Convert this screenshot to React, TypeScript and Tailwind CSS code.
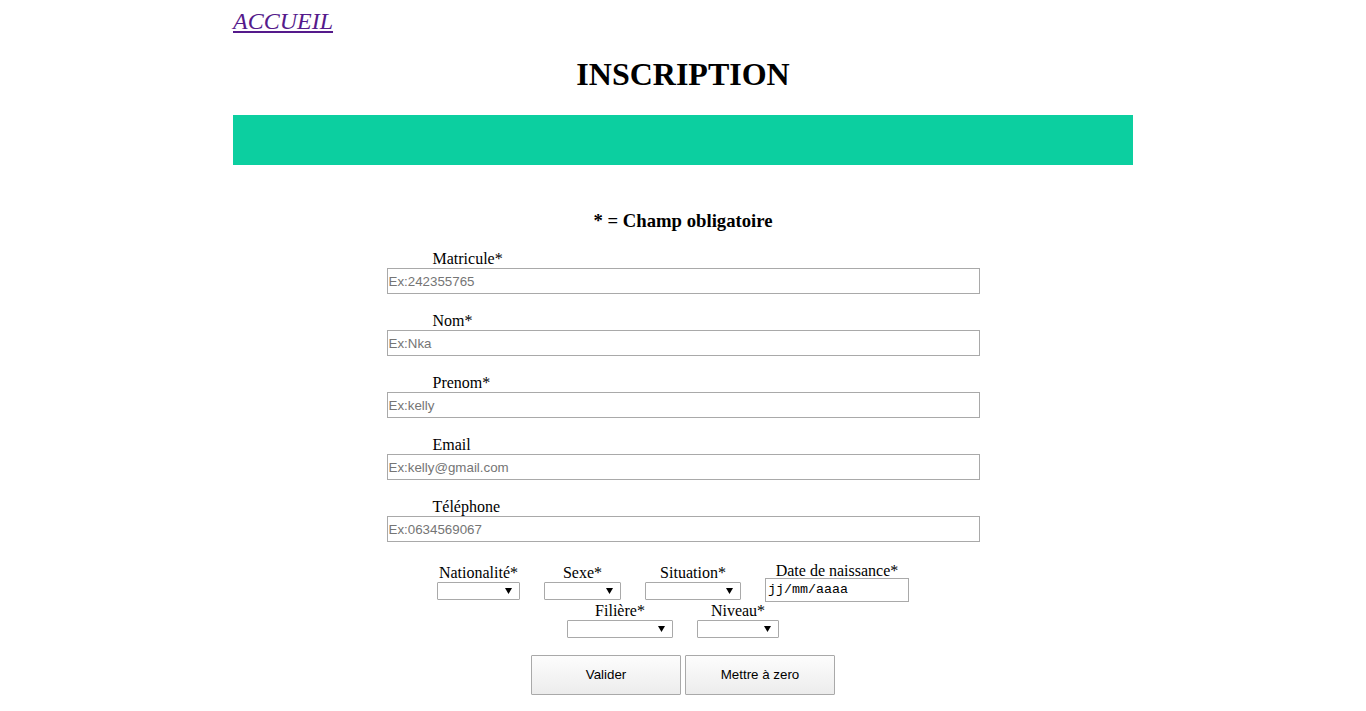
import React from "react";

const serif = "font-['Liberation_Serif','Times_New_Roman',serif]";
const sans = "font-['Liberation_Sans',Arial,sans-serif]";

function Field({ label, placeholder }: { label: string; placeholder: string }) {
  return (
    <div className="mb-[18px]">
      <div className={`${serif} text-[16px] leading-[18px] h-[18px] pl-[46px] text-black`}>{label}</div>
      <input
        type="text"
        placeholder={placeholder}
        className={`${sans} block w-[593px] h-[26px] border border-[#a9a9a9] px-[1px] text-[13.33px] text-black placeholder:text-[#757575] outline-none bg-white`}
      />
    </div>
  );
}

function Select({ width }: { width: number }) {
  return (
    <div
      className="relative h-[18px] border border-[#a9a9a9] bg-white rounded-[1px]"
      style={{ width }}
    >
      <svg className="absolute right-[7px] top-[5px]" width="7" height="6" viewBox="0 0 7 6">
        <polygon points="0,0 7,0 3.5,6" fill="#000" />
      </svg>
    </div>
  );
}

function SelCol({ label, width }: { label: string; width: number }) {
  return (
    <div className="flex flex-col items-center pb-[2px]">
      <div className={`${serif} text-[16px] leading-[18px] h-[18px] whitespace-nowrap`}>{label}</div>
      <Select width={width} />
    </div>
  );
}

export default function App() {
  return (
    <div className="w-[1366px] min-h-[711px] bg-white">
      <div className="w-[900px] mx-auto">
        <div className="pt-[8px]">
          <a href="#" className={`${serif} italic text-[24px] leading-[27px] text-[#551a8b] underline`}>
            ACCUEIL
          </a>
        </div>
        <h1 className={`${serif} font-bold text-[32px] leading-[37px] text-center text-black mt-[21px]`}>
          INSCRIPTION
        </h1>
        <div className="h-[50px] bg-[#0ccfa0] mt-[22px]" />
        <h3 className={`${serif} font-bold text-[18.72px] leading-[22px] text-center text-black mt-[45px]`}>
          * = Champ obligatoire
        </h3>
        <div className="w-[593px] mx-auto mt-[18px]">
          <Field label="Matricule*" placeholder="Ex:242355765" />
          <Field label="Nom*" placeholder="Ex:Nka" />
          <Field label="Prenom*" placeholder="Ex:kelly" />
          <Field label="Email" placeholder="Ex:kelly@gmail.com" />
          <Field label="Téléphone" placeholder="Ex:0634569067" />
        </div>
        <div className="flex justify-center items-end gap-[24px] pr-[20px] pt-[2px]">
          <SelCol label="Nationalité*" width={83} />
          <SelCol label="Sexe*" width={77} />
          <SelCol label="Situation*" width={96} />
          <div className="flex flex-col items-center">
            <div className={`${serif} text-[16px] leading-[18px] h-[18px] -mb-[2px] whitespace-nowrap`}>Date de naissance*</div>
            <div className="w-[144px] h-[24px] border border-[#a9a9a9] bg-white flex items-center pl-[2px]">
              <span className="font-['Liberation_Mono','Courier_New',monospace] text-[13.33px] text-black">jj/mm/aaaa</span>
            </div>
          </div>
        </div>
        <div className="flex justify-center items-end gap-[24px] pr-[20px]">
          <SelCol label="Filière*" width={106} />
          <SelCol label="Niveau*" width={82} />
        </div>
        <div className="flex justify-center gap-[4px] mt-[15px]">
          <button
            className={`${sans} w-[150px] h-[40px] border border-[#a9a9a9] bg-gradient-to-b from-[#fdfdfd] to-[#ececec] text-[13.33px] text-black rounded-[1px]`}
          >
            Valider
          </button>
          <button
            className={`${sans} w-[150px] h-[40px] border border-[#a9a9a9] bg-gradient-to-b from-[#fdfdfd] to-[#ececec] text-[13.33px] text-black rounded-[1px]`}
          >
            Mettre à zero
          </button>
        </div>
      </div>
    </div>
  );
}
